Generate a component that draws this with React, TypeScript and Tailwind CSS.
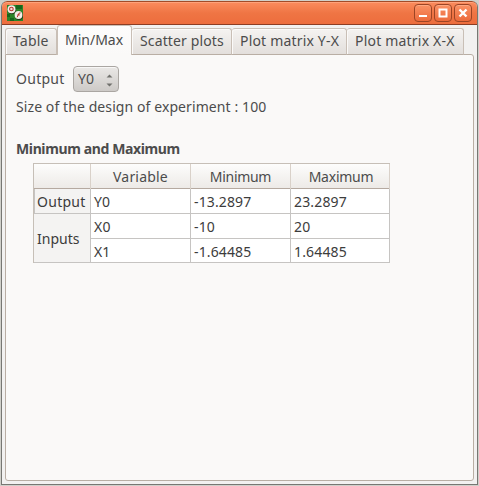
import React from "react";

function AppIcon() {
  return (
    <svg width="16" height="16" viewBox="0 0 16 16" className="block">
      <rect width="16" height="16" fill="#2b8427" />
      <path d="M0 9h3v3H0zM9 0h6v4H9zM3 13h4v3H3z" fill="#17661d" />
      <circle cx="4.9" cy="5.1" r="4.2" fill="#223c18" />
      <circle cx="4.5" cy="4.2" r="4" fill="#f4eee8" />
      <circle cx="4.4" cy="4" r="1.8" fill="#f4dcd8" stroke="#b8372f" strokeWidth="1.1" />
      <circle cx="11.9" cy="10.9" r="4.1" fill="#223c18" />
      <circle cx="11.5" cy="10" r="3.9" fill="#f4eee8" />
      <path d="M10.2 12.2l1.8-4 1.6-.3M10.4 9.9h2.4" fill="none" stroke="#b8372f" strokeWidth="1" />
    </svg>
  );
}

function WindowButton({ children }: { children: React.ReactNode }) {
  return (
    <div className="h-[18px] w-[18px] rounded-[4px] border border-[#9c4525] bg-gradient-to-b from-[#fa9265] to-[#ec6a3b] shadow-[inset_0_1px_0_#ffa780]">
      <svg width="16" height="16" viewBox="0 0 16 16" fill="none" stroke="#fff" strokeWidth="2">
        {children}
      </svg>
    </div>
  );
}

function Tab({ className, label, tracking }: { className: string; label: string; tracking: string }) {
  return (
    <div
      className={`h-[27px] shrink-0 whitespace-nowrap rounded-t-[3px] border-t border-r border-b border-[#c9bfb6] border-b-[#b9aea4] bg-gradient-to-b from-[#f5f3f1] to-[#e3dfdc] pt-px leading-[22px] shadow-[inset_1px_1px_0_#fbfaf9] ${className}`}
    >
      <span className={tracking}>{label}</span>
    </div>
  );
}

const cell = "border-r border-b border-[#c6c4c2] bg-white pl-[3px] leading-[25px]";
const head = "border-r border-[#d9d1c9] text-center leading-[25px]";

export default function App() {
  return (
    <div className="h-[486px] w-[479px] overflow-hidden bg-[#d0d0ca] p-px font-['Noto_Sans','Open_Sans',sans-serif] text-[14px] text-[#4c4c4c]">
      <div className="flex h-[484px] w-[477px] flex-col overflow-hidden rounded-t-[6px] border-r border-b border-l border-[#777773] bg-[#f2f1f0]">
        <header className="flex h-6 shrink-0 items-center rounded-t-[5px] border-t border-b border-t-[#a34b28] border-b-[#8d3d23] bg-gradient-to-b from-[#fb8c5e] via-[#ef7544] to-[#ed6d3d] px-[5px] shadow-[inset_0_1px_0_#ffa27a]">
          <AppIcon />
          <div className="ml-auto flex gap-[2px]">
            <WindowButton><path d="M4 11h8" /></WindowButton>
            <WindowButton><path d="M4.5 4.5h7v7h-7z" /></WindowButton>
            <WindowButton><path d="M4.5 4.5l7 7M11.5 4.5l-7 7" strokeWidth="2.4" /></WindowButton>
          </div>
        </header>

        <nav className="relative z-10 flex h-[30px] shrink-0 items-end pl-[3px]">
          <Tab className="w-[52px] border-l pl-[7px]" label="Table" tracking="tracking-[0.2px]" />
          <div className="h-[30px] w-[75px] shrink-0 whitespace-nowrap rounded-t-[3px] border-t border-r border-l border-[#c9bfb6] bg-gradient-to-b from-[#fdfcfc] to-[#faf9f8] pt-[2px] pl-[7px] leading-[24px]">
            <span>Min/Max</span>
          </div>
          <Tab className="w-[100px] pl-[8px]" label="Scatter plots" tracking="tracking-[0.13px]" />
          <Tab className="w-[115px] pl-[8px]" label="Plot matrix Y-X" tracking="tracking-[0.18px]" />
          <Tab className="w-[117px] pl-[8px]" label="Plot matrix X-X" tracking="tracking-[0.2px]" />
        </nav>

        <main className="-mt-px ml-[3px] h-[427px] w-[469px] shrink-0 rounded-[3px] rounded-tl-none border border-[#b9aea4] bg-[#faf9f8] pt-[11px] pl-[10px] whitespace-nowrap">
          <div className="flex h-[26px] items-center">
            <label className="w-[57px] leading-[26px]"><span className="tracking-[0.28px]">Output</span></label>
            <button className="flex h-[26px] w-[46px] items-center justify-between rounded-[4px] border border-[#aaa6a2] bg-gradient-to-b from-[#eae8e6] to-[#cdcac7] pr-[5px] pl-[4px] shadow-[inset_0_1px_0_#f8f7f6]">
              <span className="leading-[24px] tracking-[0.2px]">Y0</span>
              <svg width="7" height="13" viewBox="0 0 7 13" fill="#70706c" className="mt-[3px]">
                <path d="M.5 3.5h6L3.5.5zM.5 9.5h6l-3 3z" />
              </svg>
            </button>
          </div>
          <p className="mt-[4px] leading-[22px]"><span className="tracking-[0.09px]">Size of the design of experiment : 100</span></p>
          <h2 className="mt-[20px] font-bold leading-[22px]"><span className="tracking-[-0.38px]">Minimum and Maximum</span></h2>

          <div className="mt-[3px] ml-[17px] h-[100px] w-[357px] border-t border-l border-[#c6bfb7] text-[#3c3c3c]">
            <div className="grid h-[25px] grid-cols-[57px_100px_100px_99px] border-b border-[#b5a9a0] bg-gradient-to-b from-[#fdfdfc] to-[#edeae7] text-[#4c4c4c]">
              <div className={head} />
              <div className={head}><span className="tracking-[0.2px]">Variable</span></div>
              <div className={head}><span className="tracking-[-0.3px]">Minimum</span></div>
              <div className={`pl-[2px] ${head}`}><span className="tracking-[-0.25px]">Maximum</span></div>
            </div>
            <div className="grid grid-cols-[57px_100px_100px_99px] grid-rows-[25px_25px_24px]">
              <div className="border-r border-b border-l border-[#c6c4c2] bg-[#f4f3f2] pl-[2px] leading-[25px]"><span className="tracking-[0.28px]">Output</span></div>
              <div className={cell}><span className="tracking-[0.2px]">Y0</span></div>
              <div className={cell}><span className="tracking-[0.12px]">-13.2897</span></div>
              <div className={cell}><span className="tracking-[0.15px]">23.2897</span></div>
              <div className="row-span-2 border-r border-b border-[#c6c4c2] bg-[#f4f3f2] pl-[3px] leading-[50px]"><span>Inputs</span></div>
              <div className={cell}><span className="tracking-[0.2px]">X0</span></div>
              <div className={cell}><span className="tracking-[0.12px]">-10</span></div>
              <div className={cell}><span className="tracking-[0.15px]">20</span></div>
              <div className={cell}><span>X1</span></div>
              <div className={cell}><span className="tracking-[0.12px]">-1.64485</span></div>
              <div className={cell}><span className="tracking-[0.15px]">1.64485</span></div>
            </div>
          </div>
        </main>
      </div>
    </div>
  );
}
